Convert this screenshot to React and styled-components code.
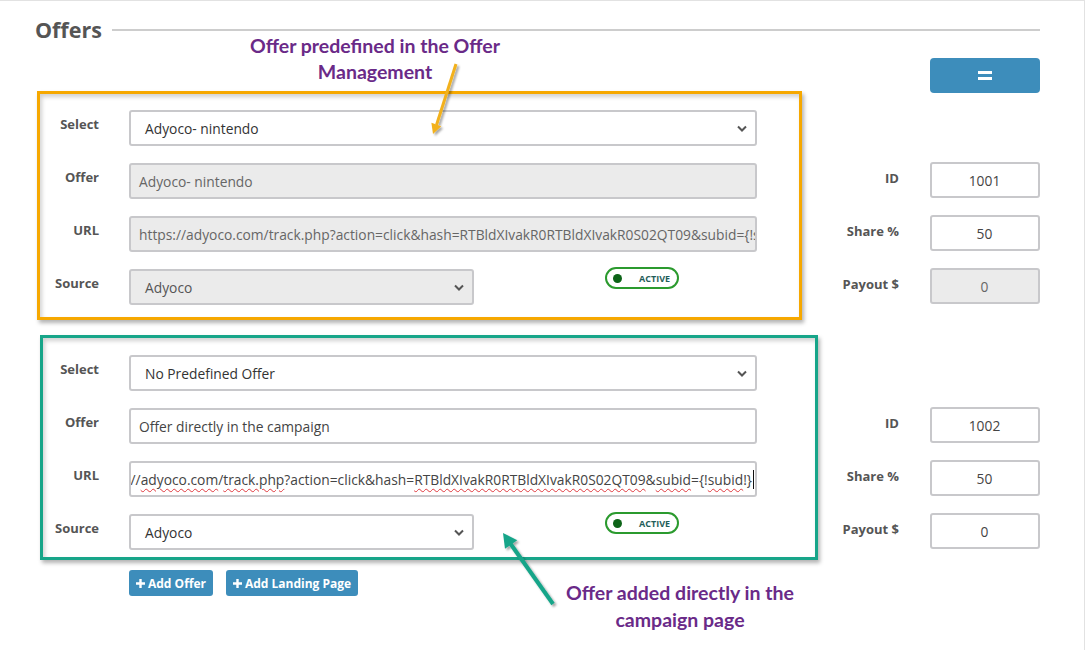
import React from 'react'
import styled, { createGlobalStyle } from 'styled-components'

const GlobalStyle = createGlobalStyle`
  body {
    margin: 0;
    background: #fff;
    font-family: "Open Sans", "Liberation Sans", sans-serif;
  }
`

const Page = styled.div`
  position: relative;
  box-sizing: border-box;
  width: 1085px;
  height: 650px;
  border-top: 1px solid #e2e2e2;
  border-right: 1px solid #e2e2e2;
  padding: 17px 44px 0 35px;
  overflow: hidden;
`

const Header = styled.div`
  display: flex;
  align-items: center;
  gap: 10px;
`

const Title = styled.h2`
  margin: 0;
  font-size: 21.5px;
  line-height: 24px;
  font-weight: 700;
  color: #555;
`

const Rule = styled.div`
  flex: 1;
  height: 2px;
  background: #cdcdcd;
`

const Toolbar = styled.div`
  display: flex;
  justify-content: flex-end;
  margin-top: 16px;
`

const MenuButton = styled.button`
  width: 110px;
  height: 35px;
  border: none;
  border-radius: 4px;
  background: #3d8dbb;
  display: flex;
  align-items: center;
  justify-content: center;
  padding: 0;
`

const Block = styled.div`
  display: flex;
  align-items: flex-start;
  margin-top: ${(p) => p.$top}px;
`

const AnnotBox = styled.div`
  box-sizing: border-box;
  width: ${(p) => p.$width}px;
  margin-left: ${(p) => p.$left}px;
  border: 3px solid ${(p) => p.$color};
  padding: ${(p) => p.$pt}px 0 ${(p) => p.$pb}px 0;
  display: grid;
  grid-template-columns: ${(p) => p.$labelW}px 628px;
  column-gap: 30px;
  row-gap: 17px;
  box-shadow: 2px 3px 4px rgba(0, 0, 0, 0.3), inset 2px 3px 4px rgba(0, 0, 0, 0.18);
`

const Label = styled.div`
  text-align: right;
  font-size: 13px;
  line-height: 18px;
  font-weight: 700;
  color: #555;
  padding-top: ${(p) => p.$pt ?? 5}px;
`

const Field = styled.div`
  box-sizing: border-box;
  height: 36px;
  width: ${(p) => (p.$width ? `${p.$width}px` : 'auto')};
  border: 2px solid #c8c8cb;
  border-radius: 3px;
  background: ${(p) => (p.$disabled ? '#ebebeb' : '#fff')};
  color: ${(p) => (p.$disabled ? '#666' : '#444')};
  font-size: 13.8px;
  padding: 0 ${(p) => (p.$end ? 1 : 9)}px 0 8px;
  display: flex;
  align-items: center;
  justify-content: ${(p) => (p.$center ? 'center' : p.$end ? 'flex-end' : 'flex-start')};
  overflow: hidden;
  white-space: nowrap;
  flex-shrink: 0;
`

const SelectField = styled(Field)`
  justify-content: space-between;
  padding: 0 8px 0 14px;
  color: ${(p) => (p.$disabled ? '#555' : '#333')};
`

const TextRun = styled.span`
  flex-shrink: 0;
  display: flex;
  align-items: center;
`

const Misspelt = styled.span`
  text-decoration: underline wavy #e0393e;
  text-decoration-thickness: 1px;
  text-underline-offset: 3px;
`

const Caret = styled.span`
  display: inline-block;
  width: 1px;
  height: 19px;
  background: #111;
  margin-left: 1px;
`

const SourceRow = styled.div`
  display: flex;
  align-items: flex-start;
`

const StatusPill = styled.div`
  box-sizing: border-box;
  margin-left: 131px;
  margin-top: -2px;
  width: 74px;
  height: 22px;
  border: 2px solid #2b9a2e;
  border-radius: 12px;
  display: flex;
  align-items: center;
  padding-left: 6px;
  gap: 17px;
  font-size: 9px;
  font-weight: 700;
  color: #1f5e5a;
`

const Dot = styled.span`
  width: 9px;
  height: 9px;
  border-radius: 50%;
  background: #0d6418;
`

const RightCol = styled.div`
  margin-left: auto;
  padding-top: ${(p) => p.$pt}px;
  display: grid;
  grid-template-columns: auto 110px;
  column-gap: 31px;
  row-gap: 17px;
`

const Actions = styled.div`
  display: flex;
  gap: 13px;
  margin: 10px 0 0 94px;
`

const SmallButton = styled.button`
  height: 26px;
  border: none;
  border-radius: 3px;
  background: #3d8dbb;
  color: #fff;
  font-family: "Open Sans", "Liberation Sans", sans-serif;
  font-size: 12px;
  font-weight: 700;
  padding: 0 7px;
  display: flex;
  align-items: center;
  gap: 3px;
`

const Callout = styled.div`
  position: absolute;
  left: ${(p) => p.$x}px;
  top: ${(p) => p.$y}px;
  width: 340px;
  text-align: center;
  font-family: Lato, "Liberation Sans", sans-serif;
  font-weight: 700;
  font-size: 19.5px;
  line-height: ${(p) => p.$lh}px;
  color: #6a2a88;
`

const ArrowLayer = styled.svg`
  position: absolute;
  left: 0;
  top: 0;
  pointer-events: none;
`

const Chevron = () => (
  <svg width="10" height="7" viewBox="0 0 10 7">
    <path d="M1 1.5l4 4 4-4" fill="none" stroke="#555" strokeWidth="2" />
  </svg>
)

const Plus = () => (
  <svg width="9" height="9" viewBox="0 0 9 9">
    <path d="M3.3 0h2.4v3.3H9v2.4H5.7V9H3.3V5.7H0V3.3h3.3z" fill="#fff" />
  </svg>
)

const Select = ({ value, width, disabled }) => (
  <SelectField $width={width} $disabled={disabled}>
    <span>{value}</span>
    <Chevron />
  </SelectField>
)

const Status = () => (
  <StatusPill>
    <Dot />
    ACTIVE
  </StatusPill>
)

const Metrics = ({ pt, id, share, payout, payoutDisabled }) => (
  <RightCol $pt={pt}>
    <Label $pt={7}>ID</Label>
    <Field $center>{id}</Field>
    <Label $pt={7}>Share %</Label>
    <Field $center>{share}</Field>
    <Label $pt={7}>Payout $</Label>
    <Field $center $disabled={payoutDisabled}>{payout}</Field>
  </RightCol>
)

export default function App() {
  return (
    <Page>
      <GlobalStyle />
      <Header>
        <Title>Offers</Title>
        <Rule />
      </Header>

      <Toolbar>
        <MenuButton>
          <svg width="14" height="9" viewBox="0 0 14 9">
            <rect x="0" y="0" width="14" height="3" fill="#fff" />
            <rect x="0" y="6" width="14" height="3" fill="#fff" />
          </svg>
        </MenuButton>
      </Toolbar>

      <Block $top={-2}>
        <AnnotBox $width={765} $left={2} $color="#f6a800" $pt={16} $pb={12} $labelW={59}>
          <Label>Select</Label>
          <Select value="Adyoco- nintendo" />
          <Label>Offer</Label>
          <Field $disabled>Adyoco- nintendo</Field>
          <Label>URL</Label>
          <Field $disabled>
            https://adyoco.com/track.php?action=click&amp;hash=RTBldXIvakR0RTBldXIvakR0S02QT09&amp;subid=&#123;!subid!&#125;
          </Field>
          <Label>Source</Label>
          <SourceRow>
            <Select value="Adyoco" width={345} disabled />
            <Status />
          </SourceRow>
        </AnnotBox>
        <Metrics pt={71} id="1001" share="50" payout="0" payoutDisabled />
      </Block>

      <Block $top={15}>
        <AnnotBox $width={778} $left={5} $color="#17a589" $pt={17} $pb={7} $labelW={56}>
          <Label>Select</Label>
          <Select value="No Predefined Offer" />
          <Label>Offer</Label>
          <Field>Offer directly in the campaign</Field>
          <Label>URL</Label>
          <Field $end>
            <TextRun>
              https://<Misspelt>adyoco.com</Misspelt>/<Misspelt>track.php</Misspelt>?action=click&amp;hash=
              <Misspelt>RTBldXIvakR0RTBldXIvakR0S02QT09</Misspelt>&amp;<Misspelt>subid</Misspelt>=&#123;!
              <Misspelt>subid</Misspelt>!&#125;
              <Caret />
            </TextRun>
          </Field>
          <Label>Source</Label>
          <SourceRow>
            <Select value="Adyoco" width={345} />
            <Status />
          </SourceRow>
        </AnnotBox>
        <Metrics pt={72} id="1002" share="50" payout="0" />
      </Block>

      <Actions>
        <SmallButton>
          <Plus />
          Add Offer
        </SmallButton>
        <SmallButton>
          <Plus />
          Add Landing Page
        </SmallButton>
      </Actions>

      <Callout $x={205} $y={32} $lh={26}>
        Offer predefined in the Offer
        <br />
        Management
      </Callout>
      <Callout $x={510} $y={578} $lh={27}>
        Offer added directly in the
        <br />
        campaign page
      </Callout>

      <ArrowLayer width="1085" height="650" viewBox="0 0 1085 650">
        <defs>
          <filter id="arrowShadow" x="-20%" y="-20%" width="140%" height="140%">
            <feDropShadow dx="2" dy="2" stdDeviation="1.2" floodColor="#000" floodOpacity="0.35" />
          </filter>
        </defs>
        <g filter="url(#arrowShadow)">
          <line x1="456" y1="63" x2="436.5" y2="124" stroke="#f2b11d" strokeWidth="3" />
          <polygon points="433,133 441.2,125.2 431.4,121.8" fill="#f2b11d" />
        </g>
        <g filter="url(#arrowShadow)">
          <line x1="553" y1="603" x2="510" y2="542" stroke="#17a589" strokeWidth="4" />
          <polygon points="503,532 517.3,539.2 505.0,547.8" fill="#17a589" />
        </g>
      </ArrowLayer>
    </Page>
  )
}
